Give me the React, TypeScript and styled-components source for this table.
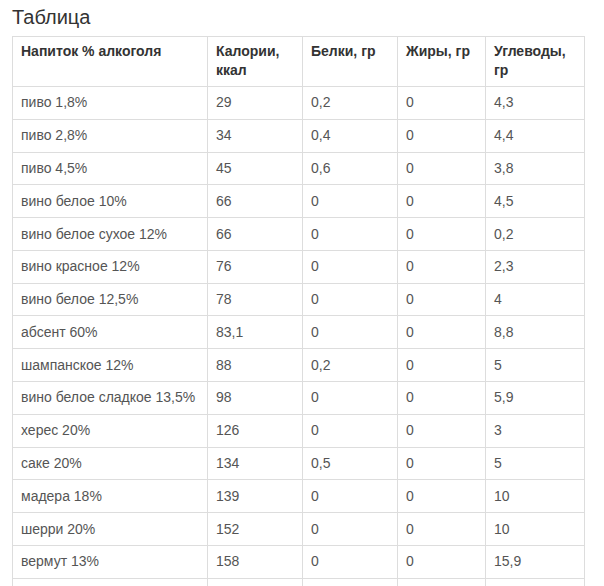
import React from "react";
import styled, { createGlobalStyle } from "styled-components";

const Global = createGlobalStyle`
  html, body { margin: 0; padding: 0; background: #fff; }
  body { font-family: "Liberation Sans", Arial, sans-serif; }
`;

const Page = styled.div`
  padding: 6px 0 0 12px;
`;

const Title = styled.h2`
  margin: 0 0 7px 0;
  font-family: "Liberation Sans", Arial, sans-serif;
  font-size: 20px;
  font-weight: normal;
  line-height: 23px;
  color: #333;
`;

const Table = styled.table`
  border-collapse: collapse;
  table-layout: fixed;
  width: 573px;
  font-family: "Liberation Sans", Arial, sans-serif;
  font-size: 14px;
  line-height: 19px;
`;

const Th = styled.th`
  border: 1px solid #dddddd;
  padding: 5px 8px 6px 8px;
  text-align: left;
  vertical-align: top;
  font-weight: bold;
  color: #333;
`;

const Td = styled.td`
  border: 1px solid #dddddd;
  padding: 6.4px 8px;
  text-align: left;
  vertical-align: top;
  color: #555;
`;

const widths = [195, 95, 95, 88, 99];

const headers = ["Напиток % алкоголя", "Калории, ккал", "Белки, гр", "Жиры, гр", "Углеводы, гр"];

const rows: string[][] = [
  ["пиво 1,8%", "29", "0,2", "0", "4,3"],
  ["пиво 2,8%", "34", "0,4", "0", "4,4"],
  ["пиво 4,5%", "45", "0,6", "0", "3,8"],
  ["вино белое 10%", "66", "0", "0", "4,5"],
  ["вино белое сухое 12%", "66", "0", "0", "0,2"],
  ["вино красное 12%", "76", "0", "0", "2,3"],
  ["вино белое 12,5%", "78", "0", "0", "4"],
  ["абсент 60%", "83,1", "0", "0", "8,8"],
  ["шампанское 12%", "88", "0,2", "0", "5"],
  ["вино белое сладкое 13,5%", "98", "0", "0", "5,9"],
  ["херес 20%", "126", "0", "0", "3"],
  ["саке 20%", "134", "0,5", "0", "5"],
  ["мадера 18%", "139", "0", "0", "10"],
  ["шерри 20%", "152", "0", "0", "10"],
  ["вермут 13%", "158", "0", "0", "15,9"],
  ["\u00a0", "\u00a0", "\u00a0", "\u00a0", "\u00a0"],
];

export default function App() {
  return (
    <Page>
      <Global />
      <Title>Таблица</Title>
      <Table>
        <colgroup>
          {widths.map((w, i) => (
            <col key={i} style={{ width: w }} />
          ))}
        </colgroup>
        <thead>
          <tr>
            {headers.map((h) => (
              <Th key={h}>{h}</Th>
            ))}
          </tr>
        </thead>
        <tbody>
          {rows.map((r, i) => (
            <tr key={i}>
              {r.map((c, j) => (
                <Td key={j}>{c}</Td>
              ))}
            </tr>
          ))}
        </tbody>
      </Table>
    </Page>
  );
}
